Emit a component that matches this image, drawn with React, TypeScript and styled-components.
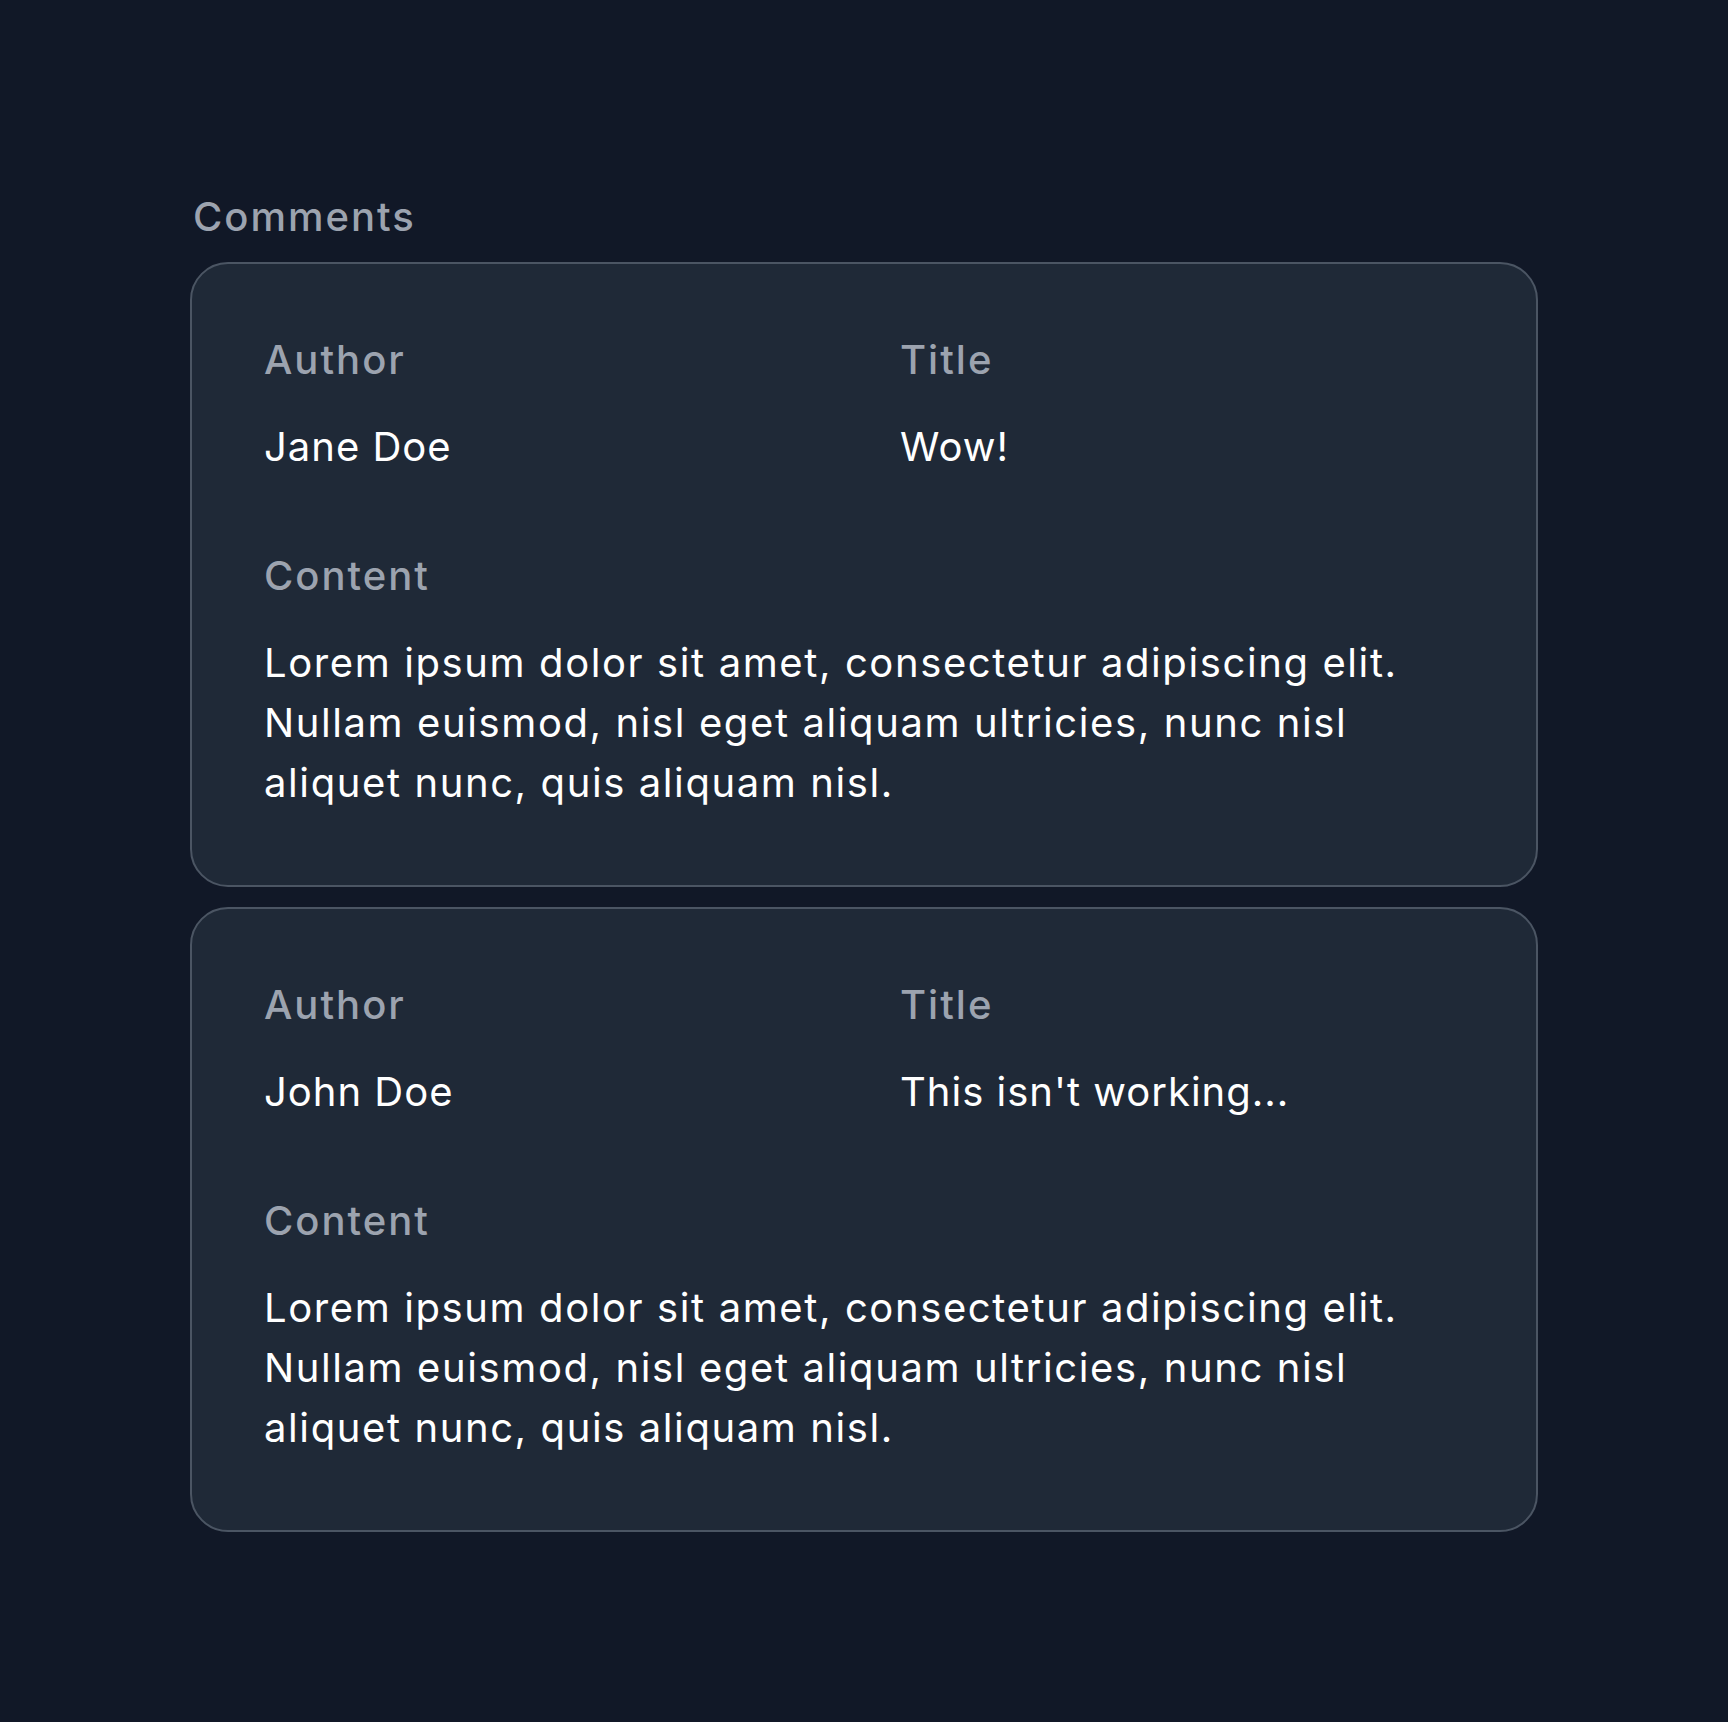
import React from "react";
import styled, { createGlobalStyle } from "styled-components";

type Comment = {
  author: string;
  title: string;
  content: string;
};

const comments: Comment[] = [
  {
    author: "Jane Doe",
    title: "Wow!",
    content:
      "Lorem ipsum dolor sit amet, consectetur adipiscing elit. Nullam euismod, nisl eget aliquam ultricies, nunc nisl aliquet nunc, quis aliquam nisl.",
  },
  {
    author: "John Doe",
    title: "This isn't working...",
    content:
      "Lorem ipsum dolor sit amet, consectetur adipiscing elit. Nullam euismod, nisl eget aliquam ultricies, nunc nisl aliquet nunc, quis aliquam nisl.",
  },
];

const GlobalStyle = createGlobalStyle`
  html, body {
    margin: 0;
    padding: 0;
    background: #111827;
  }
  body {
    font-family: Inter, "Noto Sans", sans-serif;
    -webkit-font-smoothing: antialiased;
  }
`;

const Page = styled.main`
  min-height: 1722px;
  box-sizing: border-box;
  padding: 187px 0 190px;
`;

const Section = styled.section`
  width: 1348px;
  margin: 0 auto;
`;

const Heading = styled.h2`
  margin: 0 0 15px 3px;
  font-size: 40px;
  line-height: 60px;
  font-weight: 500;
  letter-spacing: 2px;
  color: #9ca3af;
`;

const List = styled.div`
  display: flex;
  flex-direction: column;
  gap: 20px;
`;

const Card = styled.article`
  box-sizing: border-box;
  background: #1f2937;
  border: 2px solid #4b5563;
  border-radius: 38px;
  padding: 66px 72px 72px;
`;

const Fields = styled.dl`
  margin: 0;
  display: grid;
  grid-template-columns: 1fr 1fr;
  column-gap: 72px;
  row-gap: 69px;
`;

const Field = styled.div<{ $wide?: boolean }>`
  grid-column: ${(p) => (p.$wide ? "1 / -1" : "auto")};
`;

const Label = styled.dt`
  font-size: 40px;
  line-height: 60px;
  font-weight: 500;
  letter-spacing: 2px;
  color: #9ca3af;
`;

const Value = styled.dd<{ $long?: boolean }>`
  margin: 27px 0 0;
  font-size: 40px;
  line-height: 60px;
  font-weight: 400;
  letter-spacing: ${(p) => (p.$long ? "1.6px" : "1px")};
  color: #ffffff;
  max-width: 1165px;
`;

const CommentCard: React.FC<Comment> = ({ author, title, content }) => (
  <Card>
    <Fields>
      <Field>
        <Label>Author</Label>
        <Value>{author}</Value>
      </Field>
      <Field>
        <Label>Title</Label>
        <Value>{title}</Value>
      </Field>
      <Field $wide>
        <Label>Content</Label>
        <Value $long>{content}</Value>
      </Field>
    </Fields>
  </Card>
);

export default function App() {
  return (
    <>
      <GlobalStyle />
      <Page>
        <Section>
          <Heading>Comments</Heading>
          <List>
            {comments.map((c) => (
              <CommentCard key={c.author} {...c} />
            ))}
          </List>
        </Section>
      </Page>
    </>
  );
}
